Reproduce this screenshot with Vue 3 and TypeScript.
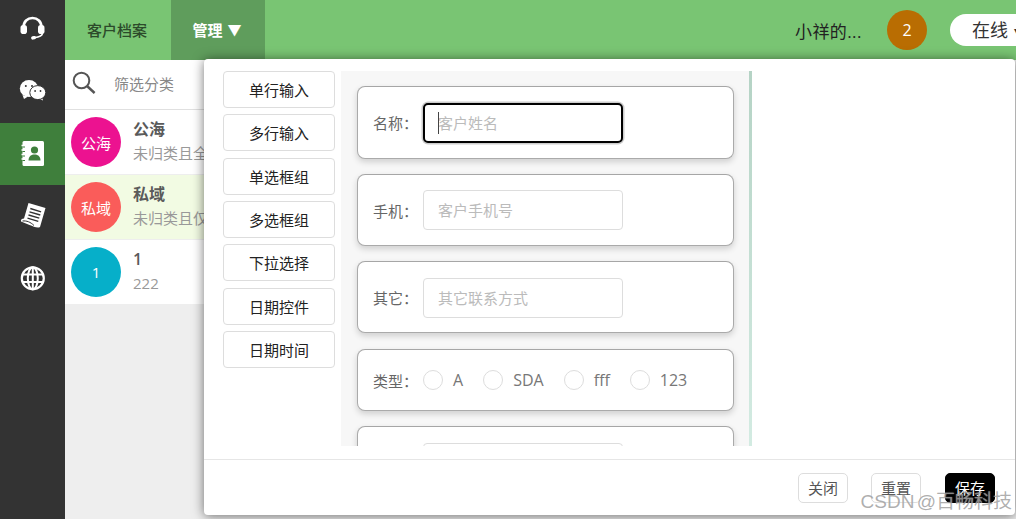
<script setup lang="ts">
const customers = [
  { name: '公海', desc: '未归类且全部可见', badge: '公海', color: '#ec1290', active: false },
  { name: '私域', desc: '未归类且仅自己可见', badge: '私域', color: '#fa5c5a', active: true },
  { name: '1', desc: '222', badge: '1', color: '#06afc9', active: false },
]

const widgets = ['单行输入', '多行输入', '单选框组', '多选框组', '下拉选择', '日期控件', '日期时间']

const radios = ['A', 'SDA', 'fff', '123']
</script>

<template>
  <div class="app">
    <nav class="nav">
      <div class="nav-item nav-first">
        <svg viewBox="17.5 15.5 30 30" width="30" height="30">
          <path d="M23 27 C23 21 27 17.5 32 17.5 C37 17.5 41 21 41 27" fill="none" stroke="#fff" stroke-width="2.6" />
          <rect x="20" y="24.5" width="6.5" height="9" rx="2.8" fill="#fff" />
          <rect x="37.5" y="24.5" width="6.5" height="9" rx="2.8" fill="#fff" />
          <path d="M42 33 C41.5 35.5 38 36.6 34 37.2" fill="none" stroke="#fff" stroke-width="1.5" />
          <rect x="30.5" y="35.6" width="5" height="3.4" rx="1.7" fill="#fff" transform="rotate(-12 33 37)" />
        </svg>
      </div>
      <div class="nav-item">
        <svg viewBox="17.5 76 30 30" width="30" height="30">
          <path d="M22 94 L23.5 98 L27.5 95.5 Z" fill="#fff" />
          <ellipse cx="28.5" cy="87.5" rx="9.2" ry="8.5" fill="#fff" />
          <circle cx="25.3" cy="85" r="1" fill="#333" />
          <circle cx="31.5" cy="85" r="1" fill="#333" />
          <path d="M41.5 96 L42.5 99.5 L38 97.5 Z" fill="#fff" />
          <ellipse cx="37.3" cy="91.6" rx="8" ry="7" fill="#fff" stroke="#333" stroke-width="1" />
          <circle cx="34.6" cy="90" r=".9" fill="#333" />
          <circle cx="40" cy="90" r=".9" fill="#333" />
        </svg>
      </div>
      <div class="nav-item active">
        <svg viewBox="17.5 138 30 30" width="30" height="30">
          <rect x="22" y="140" width="21.5" height="25" rx="1.5" fill="#fff" />
          <path d="M21 144.5 H24 M21 149 H24 M21 153.5 H24 M21 158 H24" stroke="#fff" stroke-width="1.5" />
          <path d="M22 146 H24.5 M22 150.5 H24.5 M22 155 H24.5 M22 159.5 H24.5" stroke="#3f7f3c" stroke-width="1" />
          <circle cx="34" cy="149" r="3.6" fill="#3f7f3c" />
          <path d="M28 159.5 C28 155 31 153.4 34 153.4 C37 153.4 40 155 40 159.5 Z" fill="#3f7f3c" />
        </svg>
      </div>
      <div class="nav-item">
        <svg viewBox="17.5 200 30 30" width="30" height="30">
          <path d="M28 202 L45 207 L39.5 226 C37 227.5 33 225.5 29 224 L20.5 220.5 C20 218.5 21.5 217.5 23.5 217.5 Z" fill="#fff" />
          <path d="M29.8 207.5 L40.6 210.8 M29 210.8 L39.8 214 M28 214 L38.8 217.2 M27 217.2 L37.8 220.4" stroke="#333" stroke-width="1.4" />
          <path d="M22 220 C26 219.5 30 221 33.5 224.5" fill="none" stroke="#333" stroke-width="1" />
        </svg>
      </div>
      <div class="nav-item">
        <svg viewBox="17.5 262.5 30 30" width="30" height="30" fill="none" stroke="#fff" stroke-width="2">
          <circle cx="32.3" cy="277.8" r="11" stroke-width="2.2" />
          <ellipse cx="32.3" cy="277.8" rx="5" ry="11" />
          <path d="M32.3 267 V289 M21.5 274 H43 M21.5 281.6 H43" />
        </svg>
      </div>
    </nav>

    <div class="main">
      <header class="topbar">
        <div class="tab">客户档案</div>
        <div class="tab tab-current">管理 <span class="tab-arrow">▼</span></div>
        <div class="topbar-right">
          <span class="user-name">小祥的...</span>
          <span class="count">2</span>
          <span class="status">在线<i class="status-caret">▾</i></span>
        </div>
      </header>

      <div class="content">
        <aside class="side">
          <div class="search">
            <svg viewBox="0 0 24 24" width="24" height="24" fill="none" stroke="#555" stroke-width="2">
              <circle cx="9.5" cy="9.5" r="7.8" />
              <path d="M15 15 L22.6 22" stroke-width="2.4" />
            </svg>
            <span>筛选分类</span>
          </div>
          <div
            v-for="item in customers"
            :key="item.name"
            class="row"
            :class="{ 'row-active': item.active }"
          >
            <span class="avatar" :style="{ background: item.color }">{{ item.badge }}</span>
            <div class="row-text">
              <div class="row-name">{{ item.name }}</div>
              <div class="row-desc">{{ item.desc }}</div>
            </div>
          </div>
        </aside>
      </div>
    </div>

    <section class="dialog">
      <div class="dialog-body">
        <div class="widgets">
          <button v-for="w in widgets" :key="w" type="button" class="widget">{{ w }}</button>
        </div>
        <div class="pane">
          <div class="card card-first">
            <label class="label">名称：</label>
            <div class="input input-focus"><i class="caret" />客户姓名</div>
          </div>
          <div class="card">
            <label class="label">手机：</label>
            <div class="input">客户手机号</div>
          </div>
          <div class="card card-low">
            <label class="label">其它：</label>
            <div class="input">其它联系方式</div>
          </div>
          <div class="card card-radio">
            <label class="label">类型：</label>
            <div class="radios">
              <span v-for="r in radios" :key="r" class="radio"><i class="dot" />{{ r }}</span>
            </div>
          </div>
          <div class="card card-low">
            <label class="label" />
            <div class="input" />
          </div>
          <div class="thumb" />
        </div>
      </div>
      <footer class="dialog-foot">
        <button type="button" class="foot-btn">关闭</button>
        <button type="button" class="foot-btn">重置</button>
        <button type="button" class="foot-btn foot-save">保存</button>
      </footer>
    </section>

    <div class="watermark">CSDN @百畅科技</div>
  </div>
</template>

<style>
html,
body {
  margin: 0;
  overflow: hidden;
}
</style>

<style scoped>
.app {
  position: relative;
  display: flex;
  width: 1016px;
  height: 519px;
  overflow: hidden;
  font-family: "Open Sans", "Noto Sans CJK SC", sans-serif;
  font-size: 14px;
  background: #eee;
}

.nav {
  flex: none;
  width: 65px;
  background: #333;
}

.nav-item {
  display: flex;
  align-items: center;
  justify-content: center;
  height: 62px;
}

.nav-first {
  height: 61px;
}

.nav-item.active {
  background: #3f7f3c;
}

.main {
  display: flex;
  flex: 1;
  flex-direction: column;
  min-width: 0;
}

.topbar {
  display: flex;
  flex: none;
  height: 60px;
  background: #79c573;
}

.tab {
  display: flex;
  align-items: center;
  justify-content: center;
  box-sizing: border-box;
  width: 106px;
  padding: 0 2px 2px 0;
  color: #2c4a2a;
  font-size: 15px;
  font-weight: 500;
}

.tab-current {
  width: 94px;
  color: #fff;
  font-weight: 700;
  background: #5f9d5c;
}

.tab-arrow {
  margin-left: 5px;
  font-size: 14px;
}

.topbar-right {
  display: flex;
  align-items: center;
  margin-left: auto;
  margin-right: -34px;
}

.user-name {
  width: 92px;
  color: #222;
  font-size: 17px;
  letter-spacing: 0.4px;
}

.count {
  display: flex;
  align-items: center;
  justify-content: center;
  width: 40px;
  height: 40px;
  margin-right: 23px;
  border-radius: 50%;
  color: #fff;
  font-size: 16px;
  background: #b96d02;
}

.status {
  box-sizing: border-box;
  width: 100px;
  height: 32px;
  padding-left: 22px;
  border-radius: 16px;
  color: #333;
  font-size: 18px;
  line-height: 32px;
  background: #fff;
}

.status-caret {
  margin-left: 6px;
  font-size: 10px;
  font-style: normal;
  vertical-align: 3px;
}

.content {
  flex: 1;
  display: flex;
}

.side {
  width: 300px;
}

.search {
  display: flex;
  align-items: center;
  box-sizing: border-box;
  height: 50px;
  padding: 0 0 4px 7px;
  border-bottom: 1px solid #e0e0e0;
  color: #888;
  font-size: 15px;
  background: #fff;
}

.search span {
  margin-left: 18px;
  padding-top: 2px;
}

.row {
  display: flex;
  align-items: center;
  box-sizing: border-box;
  height: 65px;
  padding-left: 6px;
  border-bottom: 1px solid #eee;
  background: #fff;
}

.row-active {
  background: #f2fbe3;
}

.row:last-child {
  height: 64px;
  border-bottom: 0;
}

.avatar {
  display: flex;
  flex: none;
  align-items: center;
  justify-content: center;
  width: 50px;
  height: 50px;
  border-radius: 50%;
  color: #fff;
  font-size: 15px;
}

.row-text {
  margin-left: 12px;
  padding-bottom: 2px;
  white-space: nowrap;
}

.row-name {
  color: #5a5a5a;
  font-size: 16px;
  font-weight: 600;
  line-height: 22px;
}

.row-desc {
  margin-top: 2px;
  color: #999;
  font-size: 15px;
  line-height: 22px;
}

/* modal over the page */
.dialog {
  position: absolute;
  top: 59px;
  left: 204px;
  display: flex;
  flex-direction: column;
  box-sizing: border-box;
  width: 811px;
  height: 456px;
  border-radius: 4px;
  background: #fff;
  box-shadow: 0 1px 12px rgba(0, 0, 0, 0.55);
}

.dialog-body {
  display: flex;
  flex: none;
  height: 401px;
  padding: 12px 0 0 19px;
  box-sizing: border-box;
  border-bottom: 1px solid #e6e6e6;
}

.widgets {
  display: flex;
  flex: none;
  flex-direction: column;
  width: 112px;
  margin-top: 0.2px;
  row-gap: 6.3px;
}

.widget {
  box-sizing: border-box;
  height: 37px;
  padding: 0;
  border: 1px solid #ddd;
  border-radius: 4px;
  color: #222;
  font: inherit;
  font-size: 15px;
  background: #fff;
}

.pane {
  position: relative;
  flex: none;
  box-sizing: border-box;
  width: 411px;
  height: 375px;
  margin-left: 6px;
  padding: 15px 0 0 16px;
  overflow: hidden;
  background: #f7f7f7;
}

.card {
  display: flex;
  align-items: center;
  box-sizing: border-box;
  width: 377px;
  height: 72px;
  margin-bottom: 15px;
  padding-left: 15px;
  border: 1px solid #aaa;
  border-top-color: #a6a6a6;
  border-radius: 8px;
  background: #fff;
  box-shadow: 0 3px 6px rgba(0, 0, 0, 0.16);
}

.card-first {
  height: 73px;
}

.card-low {
  padding-top: 1px;
}

.card-radio {
  height: 62px;
  margin-top: 16px;
}

.label {
  flex: none;
  width: 50px;
  color: #666;
  font-size: 15px;
}

.input {
  position: relative;
  flex: none;
  box-sizing: border-box;
  width: 200px;
  height: 40px;
  padding-left: 14px;
  border: 1px solid #ddd;
  border-radius: 4px;
  color: #bbb;
  font-size: 15px;
  line-height: 38px;
  background: #fff;
}

.input-focus {
  border: 2px solid #000;
  padding-left: 13px;
  line-height: 36px;
  border-radius: 5px;
  box-shadow: 0 0 0 1.5px #ccc;
}

.caret {
  position: absolute;
  top: 7px;
  left: 13px;
  width: 1px;
  height: 22px;
  background: #444;
}

.radios {
  display: flex;
  align-items: center;
  color: #777;
}

.radio {
  display: flex;
  align-items: center;
  margin-right: 20px;
  font-size: 16px;
}

.dot {
  box-sizing: border-box;
  width: 20px;
  height: 20px;
  margin-right: 10px;
  border: 1px solid #ddd;
  border-radius: 50%;
}

.thumb {
  position: absolute;
  top: 0;
  right: 0;
  width: 3px;
  height: 375px;
  background: linear-gradient(180deg, #b5d3c5, #d3ebe2);
}

.dialog-foot {
  display: flex;
  flex: 1;
  align-items: flex-start;
  padding: 13px 0 0 594px;
}

.foot-btn {
  box-sizing: border-box;
  width: 50px;
  height: 30px;
  margin-right: 23px;
  padding: 0 0 2px;
  border: 1px solid #ddd;
  border-radius: 5px;
  color: #555;
  font: inherit;
  font-size: 15px;
  background: #fff;
}

.foot-btn:nth-child(2) {
  margin-right: 24px;
}

.foot-save {
  margin-right: 0;
  border-color: #000;
  color: #fff;
  background: #000;
}

/* platform watermark stamped over the corner */
.watermark {
  position: absolute;
  right: 4px;
  bottom: 5px;
  color: rgba(140, 140, 140, 0.7);
  font-family: "Liberation Sans", "Noto Sans CJK SC", sans-serif;
  font-size: 19px;
  line-height: 24px;
  word-spacing: -3px;
  white-space: nowrap;
  text-shadow: 0 0 1px rgba(255, 255, 255, 0.6);
}
</style>
